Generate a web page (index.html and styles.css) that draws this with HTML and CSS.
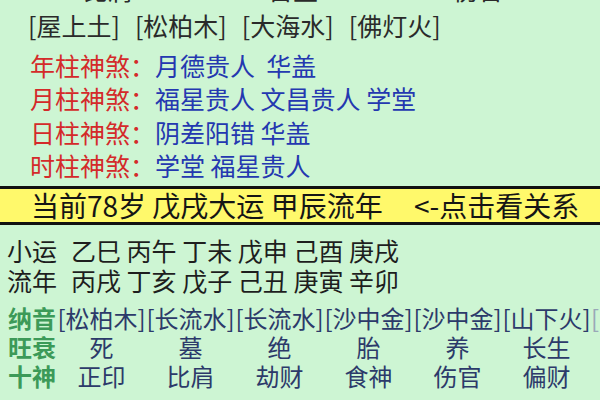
FILE: index.html
```html
<!DOCTYPE html>
<html lang="zh">
<head>
<meta charset="utf-8">
<link rel="stylesheet" href="styles.css">
</head>
<body>
<div class="page">
  <section class="top">
    <div class="row cut"><span>比肩</span><span>日主</span><span>伤官</span></div>
    <div class="row nayin">
      <span>[屋上土]</span><span>[松柏木]</span><span>[大海水]</span><span>[佛灯火]</span>
    </div>
    <div class="row ss"><span class="lbl">年柱神煞：</span><span class="val">月德贵人&nbsp; 华盖</span></div>
    <div class="row ss"><span class="lbl">月柱神煞：</span><span class="val">福星贵人 文昌贵人 学堂</span></div>
    <div class="row ss"><span class="lbl">日柱神煞：</span><span class="val">阴差阳错 华盖</span></div>
    <div class="row ss"><span class="lbl">时柱神煞：</span><span class="val">学堂 福星贵人</span></div>
  </section>

  <div class="band">当前78岁 戊戌大运 甲辰流年&nbsp;&nbsp;&nbsp;&nbsp; &lt;-点击看关系</div>

  <section class="luck">
    <div class="lrow"><span class="lkey">小运</span>乙巳 丙午 丁未 戊申 己酉 庚戌</div>
    <div class="lrow"><span class="lkey">流年</span>丙戌 丁亥 戊子 己丑 庚寅 辛卯</div>
  </section>

  <section class="grid">
    <div class="g-lbl">纳音</div>
    <div class="g-cell">[松柏木]</div>
    <div class="g-cell">[长流水]</div>
    <div class="g-cell">[长流水]</div>
    <div class="g-cell">[沙中金]</div>
    <div class="g-cell">[沙中金]</div>
    <div class="g-cell">[山下火]</div>
    <div class="g-cell faded">[</div>

    <div class="g-lbl">旺衰</div>
    <div class="g-cell">死</div>
    <div class="g-cell">墓</div>
    <div class="g-cell">绝</div>
    <div class="g-cell">胎</div>
    <div class="g-cell">养</div>
    <div class="g-cell">长生</div>
    <div class="g-cell"></div>

    <div class="g-lbl">十神</div>
    <div class="g-cell">正印</div>
    <div class="g-cell">比肩</div>
    <div class="g-cell">劫财</div>
    <div class="g-cell">食神</div>
    <div class="g-cell">伤官</div>
    <div class="g-cell">偏财</div>
    <div class="g-cell"></div>
  </section>
</div>
</body>
</html>
```

FILE: styles.css
```css
html, body {
  margin: 0;
  padding: 0;
}
body {
  width: 600px;
  height: 400px;
  overflow: hidden;
  background: #cdf5d3;
  font-family: "Noto Sans CJK SC", "Noto Sans", sans-serif;
  color: #222;
}
.page {
  width: 600px;
  height: 400px;
  overflow: hidden;
  white-space: nowrap;
}
.top {
  padding-left: 28px;
  margin-top: -27px;
}
.row {
  font-size: 25px;
  line-height: 33px;
  height: 33px;
}
.cut {
  display: flex;
  gap: 135px;
  padding-left: 55px;
  color: #2a2a2a;
  margin-bottom: 3px;
}
.nayin {
  display: flex;
  gap: 15px;
  color: #2a2a2a;
  margin-bottom: 7px;
}
.ss {
  height: 33.3px;
  line-height: 33.3px;
  padding-left: 2px;
}
.lbl {
  color: #d42a2a;
}
.val {
  color: #2438b0;
}
.band {
  margin-top: 4px;
  background: #fff96b;
  border-top: 3px solid #111;
  border-bottom: 3px solid #111;
  height: 33px;
  line-height: 33px;
  font-size: 28px;
  padding-left: 31px;
  color: #151515;
}
.luck {
  margin-top: 10px;
  padding-left: 7px;
}
.lrow {
  font-size: 25px;
  line-height: 30px;
  height: 30px;
  color: #1e1e1e;
}
.lkey {
  margin-right: 14px;
}
.grid {
  margin-top: 8px;
  padding-left: 8px;
  display: grid;
  grid-template-columns: 49px repeat(7, 89px);
  grid-auto-rows: 29px;
  align-items: center;
}
.g-lbl {
  font-size: 24px;
  font-weight: bold;
  color: #3c9a58;
  line-height: 29px;
}
.g-cell {
  font-size: 24px;
  line-height: 29px;
  text-align: center;
  color: #2c3a6a;
}
.faded {
  text-align: left;
  color: #9aa8b8;
}
```
